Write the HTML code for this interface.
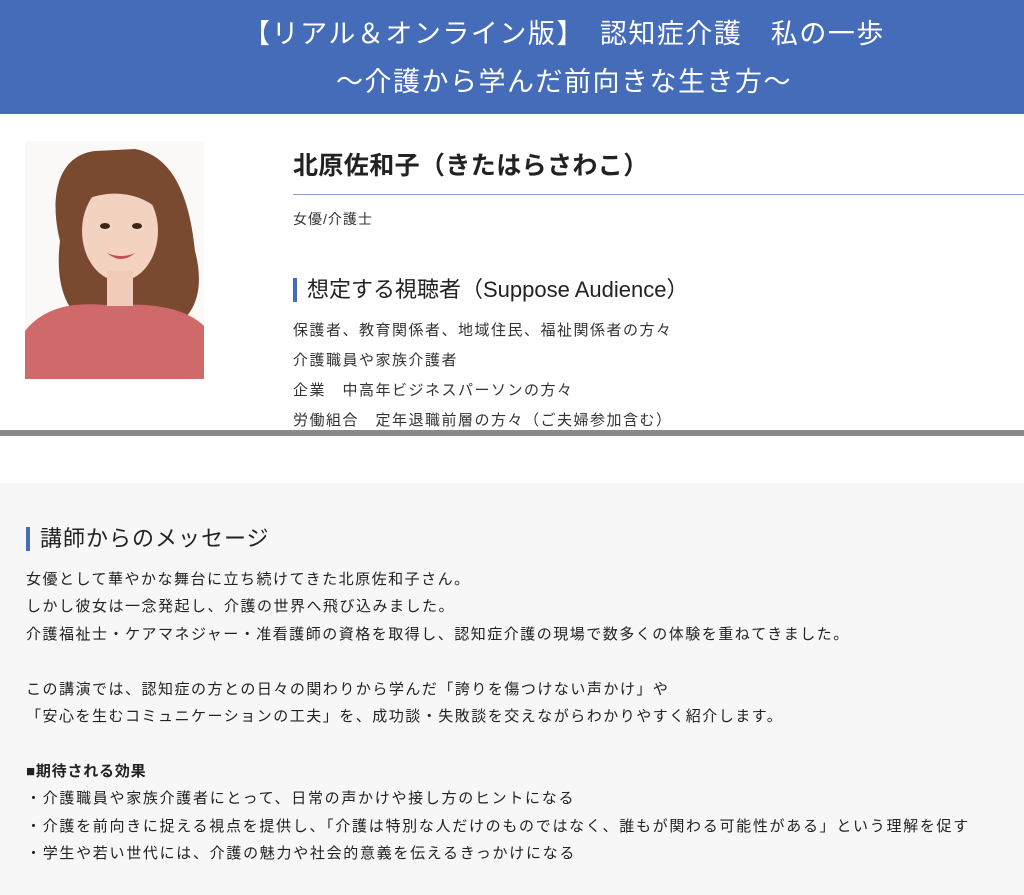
<!DOCTYPE html>
<html><head><meta charset="utf-8"><style>
*{margin:0;padding:0;box-sizing:border-box}
body{width:1024px;height:895px;overflow:hidden;background:#f7f7f7;font-family:"Liberation Sans","Noto Sans CJK JP",sans-serif;color:#222}
.hdr{position:absolute;left:0;top:0;width:1024px;height:114px;background:#456cb9;color:#fff;text-align:center;font-size:27px;letter-spacing:1.5px}
.hdr div{position:absolute;left:0;width:1024px;padding-left:104px;white-space:nowrap}
.top{position:absolute;left:0;top:114px;width:1024px;height:316px;background:#fff;overflow:hidden}
.gap{position:absolute;left:0;top:436px;width:1024px;height:47px;background:#fff}
.gbar{position:absolute;left:0;top:430px;width:1024px;height:6px;background:#8a8a8a}
.abs{position:absolute;white-space:nowrap}
.name{left:293px;top:32px;font-size:25px;font-weight:700;letter-spacing:0.4px;color:#222}
.rule{position:absolute;left:293px;top:80px;width:731px;height:1px;background:#8e9cc6}
.role{left:293px;top:95px;font-size:14px;letter-spacing:1px;color:#333}
.h2{left:293px;top:164px;font-size:22px;letter-spacing:0px;padding-left:10px;border-left:4px solid #456cb9;line-height:24px;color:#222}
.list{left:293px;top:202px;font-size:15px;letter-spacing:1.5px;line-height:30px;color:#333}
.mh{left:26px;top:527px;font-size:22px;letter-spacing:1px;padding-left:10px;border-left:4px solid #456cb9;line-height:24px;color:#222}
.body{left:26px;top:566px;font-size:15px;letter-spacing:1.5px;line-height:27.4px;color:#222}
.body b{letter-spacing:0.8px}
.body .s{letter-spacing:1.7px}
</style></head><body>
<div class="hdr">
<div style="top:12px">【リアル＆オンライン版】　認知症介護　私の一歩</div>
<div style="top:60px">～介護から学んだ前向きな生き方～</div>
</div>
<div class="top">
<svg class="abs" style="left:25px;top:27px" width="179" height="238" viewBox="0 0 179 238">
<rect width="179" height="238" fill="#fbf9f8"/>
<path d="M70 10 C30 15 25 60 35 100 C30 140 40 170 60 180 L150 185 C175 170 178 140 170 110 C165 60 150 15 110 8 Z" fill="#7a4a30"/>
<path d="M0 238 L0 190 C20 165 50 160 90 165 C130 160 165 170 179 185 L179 238 Z" fill="#d06a6a"/>
<ellipse cx="95" cy="90" rx="38" ry="50" fill="#f3d2c0"/>
<rect x="82" y="130" width="26" height="35" fill="#f0cbb8"/>
<path d="M57 60 C70 30 120 25 135 70 C120 55 90 45 57 60 Z" fill="#7a4a30"/>
<ellipse cx="80" cy="85" rx="5" ry="3" fill="#3a2418"/><ellipse cx="112" cy="85" rx="5" ry="3" fill="#3a2418"/>
<path d="M82 112 Q96 124 110 112 Q96 118 82 112Z" fill="#c05050"/>
</svg>
<div class="abs name">北原佐和子（きたはらさわこ）</div>
<div class="rule"></div>
<div class="abs role">女優/介護士</div>
<div class="abs h2">想定する視聴者（Suppose Audience）</div>
<div class="abs list">保護者、教育関係者、地域住民、福祉関係者の方々<br>介護職員や家族介護者<br>企業　中高年ビジネスパーソンの方々<br>労働組合　定年退職前層の方々（ご夫婦参加含む）</div>
</div>
<div class="gbar"></div>
<div class="gap"></div>
<div class="abs mh">講師からのメッセージ</div>
<div class="abs body">女優として華やかな舞台に立ち続けてきた北原佐和子さん。<br>しかし彼女は一念発起し、介護の世界へ飛び込みました。<br>介護福祉士・ケアマネジャー・准看護師の資格を取得し、認知症介護の現場で数多くの体験を重ねてきました。<br><br>この講演では、認知症の方との日々の関わりから学んだ「誇りを傷つけない声かけ」や<br>「安心を生むコミュニケーションの工夫」を、成功談・失敗談を交えながらわかりやすく紹介します。<br><br><b>■期待される効果</b><br><span class="s">・介護職員や家族介護者にとって、日常の声かけや接し方のヒントになる<br>・介護を前向きに捉える視点を提供し、「介護は特別な人だけのものではなく、誰もが関わる可能性がある」という理解を促す<br>・学生や若い世代には、介護の魅力や社会的意義を伝えるきっかけになる</span></div>
</body></html>
